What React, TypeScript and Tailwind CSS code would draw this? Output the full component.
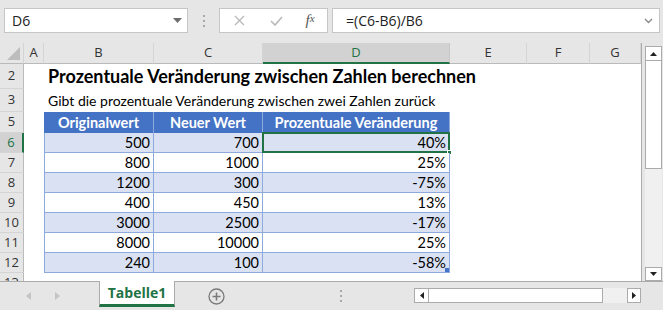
const cols = [
  { key: "A", w: "w-[20px]" },
  { key: "B", w: "w-[110px]" },
  { key: "C", w: "w-[109px]" },
  { key: "D", w: "w-[187px]" },
  { key: "E", w: "w-[77px]" },
  { key: "F", w: "w-[63px]" },
  { key: "G", w: "w-[51px]" },
];

const data = [
  { r: 6, a: 500, b: 700, p: "40%" },
  { r: 7, a: 800, b: 1000, p: "25%" },
  { r: 8, a: 1200, b: 300, p: "-75%" },
  { r: 9, a: 400, b: 450, p: "13%" },
  { r: 10, a: 3000, b: 2500, p: "-17%" },
  { r: 11, a: 8000, b: 10000, p: "25%" },
  { r: 12, a: 240, b: 100, p: "-58%" },
];

const cellFont = "font-['Lato','Liberation_Sans',sans-serif]";
const uiFont = "font-['Open_Sans','Noto_Sans',sans-serif]";

function RowHead({ n, h, active }: { n: number; h: string; active?: boolean }) {
  return (
    <div
      className={`${h} w-[24px] shrink-0 flex items-center justify-center text-[13px] border-b border-[#d4d4d4] ${
        active
          ? "bg-[#d2d2d2] text-[#217346] border-r-2 border-r-[#217346]"
          : "bg-[#e6e6e6] text-[#333] border-r border-r-[#bababa]"
      } ${uiFont}`}
    >
      {n}
    </div>
  );
}

function FormulaBar() {
  return (
    <div className={`h-[43px] shrink-0 flex items-start pt-[8px] pl-[4px] ${uiFont}`}>
      <div className="w-[184px] h-[25px] bg-white border border-[#c6c6c6] flex items-center justify-between pl-[7px] pr-[5px] text-[14px] text-[#222]">
        <span>D6</span>
        <svg width="9" height="5" viewBox="0 0 9 5">
          <path d="M0 0 L9 0 L4.5 5 Z" fill="#6d6d6d" />
        </svg>
      </div>
      <div className="w-[31px] h-[25px] flex flex-col items-center justify-center gap-[3px]">
        <div className="w-[2px] h-[2px] bg-[#a8a8a8]" />
        <div className="w-[2px] h-[2px] bg-[#a8a8a8]" />
        <div className="w-[2px] h-[2px] bg-[#a8a8a8]" />
      </div>
      <div className="w-[109px] h-[25px] bg-white border border-[#c6c6c6] flex items-center">
        <div className="w-[38px] flex justify-center">
          <svg width="11" height="11" viewBox="0 0 11 11">
            <path d="M1 1 L10 10 M10 1 L1 10" stroke="#b8b8b8" strokeWidth="1.3" />
          </svg>
        </div>
        <div className="w-[36px] flex justify-center">
          <svg width="13" height="10" viewBox="0 0 13 10">
            <path d="M1 5 L5 9 L12 1" stroke="#b8b8b8" strokeWidth="1.6" fill="none" />
          </svg>
        </div>
        <div className="w-[32px] flex justify-center font-['Liberation_Serif',serif] italic text-[#555] text-[15px] leading-none">
          f<span className="text-[11px]">x</span>
        </div>
      </div>
      <div className="ml-[4px] w-[328px] h-[25px] bg-white border border-[#c6c6c6] flex items-center justify-between pl-[13px] pr-[6px] text-[14px] text-[#222]">
        <span>=(C6-B6)/B6</span>
        <svg width="9" height="6" viewBox="0 0 9 6">
          <path d="M1 1 L4.5 4.5 L8 1" stroke="#8a8a8a" strokeWidth="1.4" fill="none" />
        </svg>
      </div>
    </div>
  );
}

function ColumnHeader() {
  return (
    <div className={`h-[21px] flex ${uiFont} text-[13px]`}>
      <div className="w-[24px] shrink-0 bg-[#e6e6e6] border-b border-[#bababa] border-r border-r-[#d4d4d4] flex items-end justify-end pr-[3px] pb-[3px]">
        <svg width="13" height="13" viewBox="0 0 13 13">
          <path d="M13 0 L13 13 L0 13 Z" fill="#bdbdbd" />
        </svg>
      </div>
      {cols.map((c) =>
        c.key === "D" ? (
          <div
            key={c.key}
            className={`${c.w} shrink-0 bg-[#d2d2d2] text-[#217346] border-b-2 border-[#217346] border-r border-r-[#c8c8c8] flex items-center justify-center`}
          >
            {c.key}
          </div>
        ) : (
          <div
            key={c.key}
            className={`${c.w} shrink-0 bg-[#e6e6e6] text-[#333] border-b border-[#bababa] border-r border-r-[#d4d4d4] flex items-center justify-center`}
          >
            {c.key}
          </div>
        )
      )}
    </div>
  );
}

function Grid() {
  return (
    <div className="w-[642px] h-[238px] overflow-hidden bg-white border-r border-[#ababab] flex flex-col">
      <ColumnHeader />
      {/* row 2: title */}
      <div className="flex h-[25px] shrink-0">
        <RowHead n={2} h="h-[25px]" />
        <div className="w-[20px]" />
        <div className={`pl-[4px] flex items-center text-[18px] font-bold text-black whitespace-nowrap ${cellFont}`}>
          Prozentuale Veränderung zwischen Zahlen berechnen
        </div>
      </div>
      {/* row 3: subtitle */}
      <div className="flex h-[23px] shrink-0">
        <RowHead n={3} h="h-[23px]" />
        <div className="w-[20px]" />
        <div className={`pl-[4px] flex items-center text-[14px] text-black whitespace-nowrap ${cellFont}`}>
          Gibt die prozentuale Veränderung zwischen zwei Zahlen zurück
        </div>
      </div>
      {/* row 5: table header */}
      <div className="flex h-[21px] shrink-0">
        <RowHead n={5} h="h-[21px]" />
        <div className="w-[20px]" />
        <div className={`flex text-white font-bold text-[14.5px] ${cellFont}`}>
          <div className="w-[110px] h-[21px] bg-[#4472c4] border-r border-[#8ea9db] flex items-center justify-center">
            Originalwert
          </div>
          <div className="w-[109px] h-[21px] bg-[#4472c4] border-r border-[#8ea9db] flex items-center justify-center">
            Neuer Wert
          </div>
          <div className="w-[187px] h-[21px] bg-[#4472c4] border-r border-[#8ea9db] flex items-center justify-center">
            Prozentuale Veränderung
          </div>
        </div>
      </div>
      {data.map((d, i) => {
        const bg = i % 2 === 0 ? "bg-[#d9e1f2]" : "bg-white";
        const last = i === data.length - 1;
        return (
          <div key={d.r} className="flex h-[20px] shrink-0">
            <RowHead n={d.r} h="h-[20px]" active={d.r === 6} />
            <div className="w-[20px]" />
            <div className={`flex text-[14.5px] text-black ${cellFont}`}>
              <div className={`w-[110px] h-[20px] ${bg} border-l border-r border-b border-[#8ea9db] flex items-center justify-end pr-[3px]`}>
                {d.a}
              </div>
              <div className={`w-[109px] h-[20px] ${bg} border-r border-b border-[#8ea9db] flex items-center justify-end pr-[3px]`}>
                {d.b}
              </div>
              <div className={`relative w-[187px] h-[20px] ${bg} border-r border-b border-[#8ea9db] flex items-center justify-end pr-[3px]`}>
                {d.p}
                {d.r === 6 && (
                  <>
                    <div className="absolute left-[-1px] top-[-1px] w-[188px] h-[21px] border-2 border-[#217346]" />
                    <div className="absolute right-[-3px] bottom-[-3px] w-[5px] h-[5px] bg-[#217346] border border-white" />
                  </>
                )}
                {last && <div className="absolute right-0 bottom-0 w-[4px] h-[4px] bg-[#4472c4]" />}
              </div>
            </div>
          </div>
        );
      })}
      <div className="flex h-[20px] shrink-0">
        <RowHead n={13} h="h-[20px]" />
      </div>
    </div>
  );
}

function VScroll() {
  return (
    <div className="w-[21px] h-[238px] flex flex-col pl-[3px] pt-[3px] pb-0">
      <div className="w-[17px] h-[15px] bg-white border border-[#ababab] flex items-center justify-center">
        <svg width="7" height="4" viewBox="0 0 7 4">
          <path d="M0 4 L7 4 L3.5 0 Z" fill="#222" />
        </svg>
      </div>
      <div className="w-[17px] h-[108px] bg-white border-x border-b border-[#ababab]" />
      <div className="w-[17px] flex-1 bg-[#f0f0f0]" />
      <div className="w-[17px] h-[14px] bg-white border border-[#ababab] flex items-center justify-center">
        <svg width="7" height="4" viewBox="0 0 7 4">
          <path d="M0 0 L7 0 L3.5 4 Z" fill="#222" />
        </svg>
      </div>
    </div>
  );
}

function TabBar() {
  return (
    <div className={`h-[29px] shrink-0 flex items-start ${uiFont}`}>
      <div className="w-[99px] h-[29px] border-t border-[#ababab] flex items-center pl-[26px] gap-[24px]">
        <svg width="5" height="8" viewBox="0 0 5 8">
          <path d="M5 0 L5 8 L0 4 Z" fill="#c4c4c4" />
        </svg>
        <svg width="5" height="8" viewBox="0 0 5 8">
          <path d="M0 0 L0 8 L5 4 Z" fill="#c4c4c4" />
        </svg>
      </div>
      <div className="w-[76px] h-[26px] bg-white border-x border-[#ababab] border-b-[3px] border-b-[#217346] flex items-center justify-center text-[14px] font-bold text-[#217346]">
        Tabelle1
      </div>
      <div className="flex-1 h-[29px] border-t border-[#ababab] flex items-start">
        <div className="w-[83px] h-[28px] flex items-center justify-center">
          <svg width="17" height="17" viewBox="0 0 17 17">
            <circle cx="8.5" cy="8.5" r="7.5" stroke="#7a7a7a" strokeWidth="1.3" fill="none" />
            <path d="M8.5 4.5 V12.5 M4.5 8.5 H12.5" stroke="#7a7a7a" strokeWidth="1.6" />
          </svg>
        </div>
        <div className="w-[156px] h-[28px] flex flex-col items-center justify-center gap-[3px] pl-[10px]">
          <div className="w-[2px] h-[2px] bg-[#a8a8a8]" />
          <div className="w-[2px] h-[2px] bg-[#a8a8a8]" />
          <div className="w-[2px] h-[2px] bg-[#a8a8a8]" />
        </div>
        <div className="mt-[6px] w-[227px] h-[15px] flex">
          <div className="w-[15px] h-[15px] bg-white border border-[#ababab] flex items-center justify-center">
            <svg width="4" height="7" viewBox="0 0 4 7">
              <path d="M4 0 L4 7 L0 3.5 Z" fill="#222" />
            </svg>
          </div>
          <div className="w-[174px] h-[15px] bg-white border-y border-r border-[#ababab]" />
          <div className="flex-1 h-[15px] bg-[#f0f0f0]" />
          <div className="w-[14px] h-[15px] bg-white border border-[#ababab] flex items-center justify-center">
            <svg width="4" height="7" viewBox="0 0 4 7">
              <path d="M0 0 L0 7 L4 3.5 Z" fill="#222" />
            </svg>
          </div>
        </div>
      </div>
    </div>
  );
}

export default function App() {
  return (
    <div className="w-[663px] h-[310px] bg-[#e6e6e6] overflow-hidden flex flex-col">
      <FormulaBar />
      <div className="flex h-[238px] shrink-0">
        <Grid />
        <VScroll />
      </div>
      <TabBar />
    </div>
  );
}
